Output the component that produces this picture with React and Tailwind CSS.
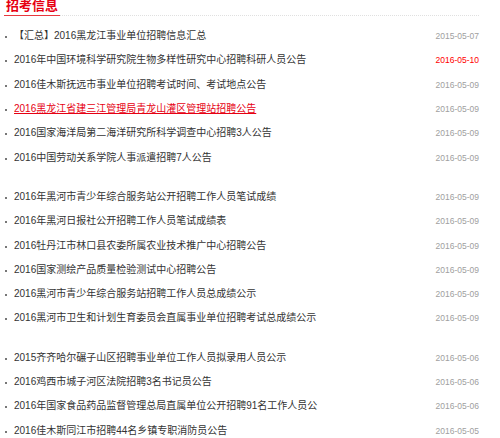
import React from 'react';

const groups = [
    [
        { title: '【汇总】2016黑龙江事业单位招聘信息汇总', date: '2015-05-07' },
        { title: '2016年中国环境科学研究院生物多样性研究中心招聘科研人员公告', date: '2016-05-10', hot: true },
        { title: '2016佳木斯抚远市事业单位招聘考试时间、考试地点公告', date: '2016-05-09' },
        { title: '2016黑龙江省建三江管理局青龙山灌区管理站招聘公告', date: '2016-05-09', active: true },
        { title: '2016国家海洋局第二海洋研究所科学调查中心招聘3人公告', date: '2016-05-09' },
        { title: '2016中国劳动关系学院人事派遣招聘7人公告', date: '2016-05-09' },
    ],
    [
        { title: '2016年黑河市青少年综合服务站公开招聘工作人员笔试成绩', date: '2016-05-09' },
        { title: '2016年黑河日报社公开招聘工作人员笔试成绩表', date: '2016-05-09' },
        { title: '2016牡丹江市林口县农委所属农业技术推广中心招聘公告', date: '2016-05-09' },
        { title: '2016国家测绘产品质量检验测试中心招聘公告', date: '2016-05-09' },
        { title: '2016黑河市青少年综合服务站招聘工作人员总成绩公示', date: '2016-05-09' },
        { title: '2016黑河市卫生和计划生育委员会直属事业单位招聘考试总成绩公示', date: '2016-05-09' },
    ],
    [
        { title: '2015齐齐哈尔碾子山区招聘事业单位工作人员拟录用人员公示', date: '2016-05-06' },
        { title: '2016鸡西市城子河区法院招聘3名书记员公告', date: '2016-05-06' },
        { title: '2016年国家食品药品监督管理总局直属单位公开招聘91名工作人员公', date: '2016-05-06' },
        { title: '2016佳木斯同江市招聘44名乡镇专职消防员公告', date: '2016-05-05' },
    ],
];

const font = { fontFamily: '"Liberation Sans", "Noto Sans CJK SC", sans-serif' };

const App = () => {
    return (
        <div className="w-[500px] h-[438px] overflow-hidden bg-white pl-[4px] pr-[21px]" style={ font }>
            {/* header */}
            <div className="flex items-end -mt-[3px] h-[19px]">
                <div className="px-[2px] pb-[1px] border-b-[1.5px] border-[#e8383d] text-[13px] leading-[16px] font-bold text-[#e60012]">
                    招考信息
                </div>
                <div className="flex-1 border-b border-dotted border-[#e0e0e0] mb-[0.5px]" />
            </div>

            <div className="mt-[8px]">
                { groups.map((group, gi) => (
                    <ul key={ gi } className={ gi > 0 ? 'mt-[15px]' : '' }>
                        { group.map((item, i) => (
                            <li key={ i } className="flex items-center h-[24.3px]">
                                <span className="w-[2px] h-[2px] bg-[#777] ml-[1px] mt-[2px] shrink-0" />
                                <span
                                    className={ 'ml-[7px] flex-1 text-[10px] leading-[14px] whitespace-nowrap overflow-hidden ' +
                                        (item.active ? 'text-[#e60012] underline' : 'text-[#333]') }
                                >
                                    { item.title }
                                </span>
                                <span className={ 'text-[8.5px] leading-[12px] ' + (item.hot ? 'text-[#ff0000]' : 'text-[#a0a0a0]') }>
                                    { item.date }
                                </span>
                            </li>
                        )) }
                    </ul>
                )) }
            </div>
        </div>
    );
};

export default App;
